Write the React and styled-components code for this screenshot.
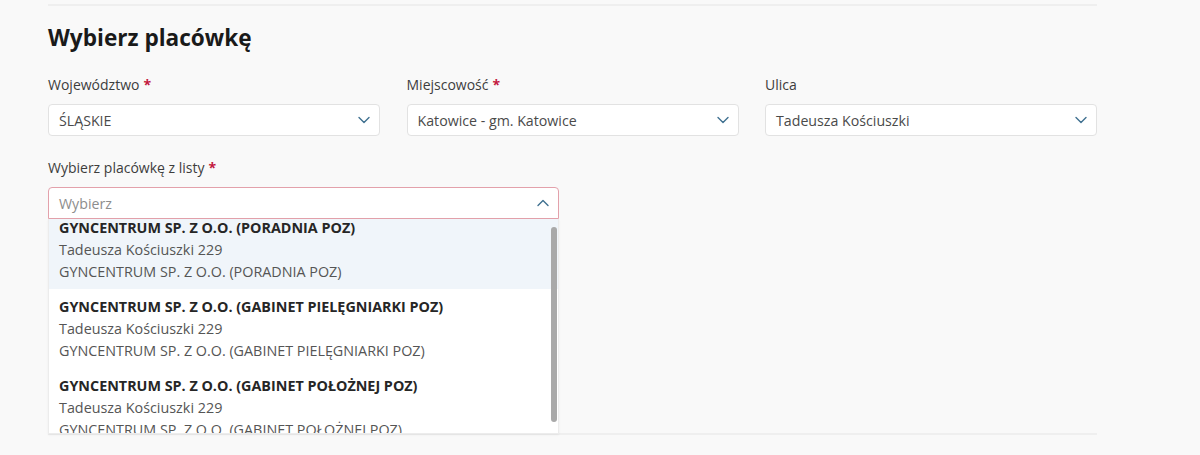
import React, { useEffect, useRef } from "react";
import styled, { createGlobalStyle } from "styled-components";

const Global = createGlobalStyle`
  html, body { margin: 0; padding: 0; background: #f9f9f9; }
  body { font-family: "Open Sans", "Noto Sans", sans-serif; color: #333; }
  * { box-sizing: border-box; }
`;

const Page = styled.div`
  width: 1200px;
  height: 455px;
  overflow: hidden;
  padding: 4px 0 0 48px;
`;

const Section = styled.section`
  width: 1049px;
  border-top: 2px solid #efefef;
  border-bottom: 2px solid #efefef;
  padding-bottom: 214px;
`;

const Heading = styled.h2`
  margin: 16px 0 21px;
  font-size: 22.6px;
  line-height: 32px;
  font-weight: 700;
  color: #1a1a1a;
`;

const Row = styled.div`
  display: grid;
  grid-template-columns: ${(p) => p.$cols || "repeat(3, 332px)"};
  column-gap: 26.5px;
  margin-bottom: ${(p) => p.$mb || 0}px;
`;

const Field = styled.div`
  position: relative;
  display: flex;
  flex-direction: column;
  gap: 9px;
`;

const Label = styled.label`
  font-size: 14px;
  line-height: 20px;
  color: #3d3d3d;
`;

const Req = styled.span`
  color: #c3183f;
  font-weight: 700;
  margin-left: 4px;
`;

const SelectBox = styled.div`
  height: 32px;
  display: flex;
  align-items: center;
  justify-content: space-between;
  padding: 0 9px 0 10px;
  background: #fff;
  border: 1px solid ${(p) => (p.$open ? "#e3a1ab" : "#e2e2e2")};
  border-radius: ${(p) => (p.$open ? "4px 4px 0 0" : "4px")};
  font-size: 14.2px;
  color: ${(p) => (p.$placeholder ? "#8d8d8d" : "#4a4a4a")};
`;

const Chevron = ({ up }) => (
  <svg width="12" height="8" viewBox="0 0 12 8" fill="none">
    <path
      d={up ? "M1 6.5 L6 1.5 L11 6.5" : "M1 1.5 L6 6.5 L11 1.5"}
      stroke="#3f7090"
      strokeWidth="1.4"
      strokeLinecap="round"
      strokeLinejoin="round"
    />
  </svg>
);

const DropdownWrap = styled.div`
  position: absolute;
  top: 61px;
  left: 0;
  width: 511px;
  height: 215px;
  background: #fff;
  border: 1px solid #ececec;
  border-top: none;
  box-shadow: 0 1px 2px rgba(0, 0, 0, 0.06);
`;

const List = styled.div`
  height: 100%;
  overflow-y: scroll;
  scrollbar-width: none;
  &::-webkit-scrollbar { display: none; }
`;

const Thumb = styled.div`
  position: absolute;
  top: 8px;
  right: 1px;
  width: 6px;
  height: 195px;
  border-radius: 3px;
  background: #a9a9a9;
`;

const Option = styled.div`
  padding: 6.5px 10px;
  background: ${(p) => (p.$active ? "#f0f5fa" : "#fff")};
  font-size: 14.35px;
  line-height: 22px;
  color: #555;
`;

const OptTitle = styled.div`
  font-weight: 700;
  color: #262626;
`;

const options = [
  "GYNCENTRUM SP. Z O.O. (PORADNIA POZ)",
  "GYNCENTRUM SP. Z O.O. (GABINET PIELĘGNIARKI POZ)",
  "GYNCENTRUM SP. Z O.O. (GABINET POŁOŻNEJ POZ)",
];

function Select({ label, required, value }) {
  return (
    <Field>
      <Label>
        {label}
        {required && <Req>*</Req>}
      </Label>
      <SelectBox>
        <span>{value}</span>
        <Chevron />
      </SelectBox>
    </Field>
  );
}

export default function App() {
  const listRef = useRef(null);
  useEffect(() => {
    if (listRef.current) listRef.current.scrollTop = 9;
  }, []);
  return (
    <Page>
      <Global />
      <Section>
        <Heading>Wybierz placówkę</Heading>
        <Row $mb={22}>
          <Select label="Województwo" required value="ŚLĄSKIE" />
          <Select label="Miejscowość" required value="Katowice - gm. Katowice" />
          <Select label="Ulica" value="Tadeusza Kościuszki" />
        </Row>
        <Row $cols="511px">
          <Field>
            <Label>
              Wybierz placówkę z listy<Req>*</Req>
            </Label>
            <SelectBox $open $placeholder>
              <span>Wybierz</span>
              <Chevron up />
            </SelectBox>
            <DropdownWrap>
              <List ref={listRef}>
                {options.map((o, i) => (
                  <Option key={o} $active={i === 0}>
                    <OptTitle>{o}</OptTitle>
                    <div>Tadeusza Kościuszki 229</div>
                    <div>{o}</div>
                  </Option>
                ))}
              </List>
              <Thumb />
            </DropdownWrap>
          </Field>
        </Row>
      </Section>
    </Page>
  );
}
